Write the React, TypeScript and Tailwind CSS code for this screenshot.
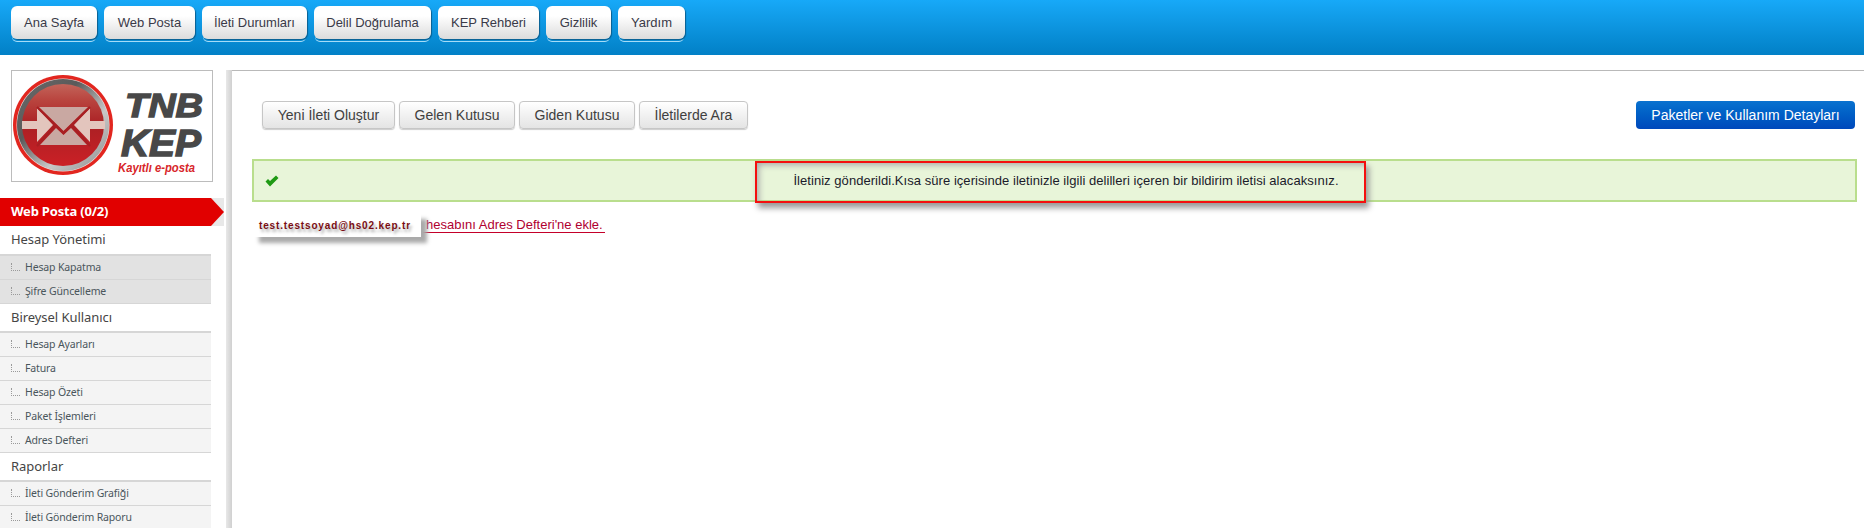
const nav: [string, number][] = [
  ["Ana Sayfa", 86],
  ["Web Posta", 91],
  ["İleti Durumları", 105],
  ["Delil Doğrulama", 117],
  ["KEP Rehberi", 101],
  ["Gizlilik", 65],
  ["Yardım", 67],
];

const tools: [string, number][] = [
  ["Yeni İleti Oluştur", 133],
  ["Gelen Kutusu", 116],
  ["Giden Kutusu", 116],
  ["İletilerde Ara", 109],
];

function Logo() {
  const font = "'Liberation Sans', sans-serif";
  return (
    <svg width="200" height="110" viewBox="0 0 200 110">
      <defs>
        <linearGradient id="ring" x1="0" y1="0" x2="1" y2="1">
          <stop offset="0" stopColor="#6a6a6a" />
          <stop offset="0.35" stopColor="#5a5a5a" />
          <stop offset="0.65" stopColor="#c8c8c8" />
          <stop offset="1" stopColor="#8a8a8a" />
        </linearGradient>
        <linearGradient id="disc" x1="0" y1="0" x2="0" y2="1">
          <stop offset="0" stopColor="#c2645a" />
          <stop offset="0.2" stopColor="#b9443e" />
          <stop offset="0.5" stopColor="#ab2024" />
          <stop offset="1" stopColor="#cb2026" />
        </linearGradient>
      </defs>
      <circle cx="51" cy="54" r="50" fill="#e2261f" />
      <circle cx="51" cy="54" r="46.5" fill="#eee0de" />
      <circle cx="51" cy="54" r="46" fill="url(#ring)" />
      <circle cx="51" cy="54" r="41" fill="url(#disc)" />
      <path d="M10 50H25V37L41 54L25 71V58H10Z" fill="#e3c5bd" />
      <path d="M93 50H78V37L62 54L78 71V58H93Z" fill="#e3c5bd" />
      <path d="M27 36H76L51.5 60Z" fill="#c9a8a2" />
      <path d="M28 74L44 57L51.5 64L59 57L75 74Z" fill="#c9a8a2" />
      <path d="M25 36L51.5 62L78 36" fill="none" stroke="#a81f22" strokeWidth="2.2" />
      <path d="M25 75L43 55M78 75L60 55" fill="none" stroke="#a81f22" strokeWidth="2.2" />
      <text x="113" y="46" fill="#484848" stroke="#484848" strokeWidth="1.4" fontSize="34" fontWeight="700" fontStyle="italic" fontFamily={font} textLength="78" lengthAdjust="spacingAndGlyphs">TNB</text>
      <text x="109" y="85" fill="#484848" stroke="#484848" strokeWidth="1.4" fontSize="36" fontWeight="700" fontStyle="italic" fontFamily={font} textLength="80" lengthAdjust="spacingAndGlyphs">KEP</text>
      <text x="106" y="101" fill="#d8262a" fontSize="12" fontWeight="700" fontStyle="italic" fontFamily={font} textLength="77" lengthAdjust="spacingAndGlyphs">Kayıtlı e-posta</text>
    </svg>
  );
}

function GroupTitle({ children, h }: { children: string; h: string }) {
  return (
    <div className={`${h} flex items-center border-b-2 border-[#d6d6d6] bg-white pl-[11px] text-[13px] tracking-[-0.05px] text-[#454545]`}>
      {children}
    </div>
  );
}

function SubItem({ children, dark }: { children: string; dark?: boolean }) {
  return (
    <div className={`flex h-6 items-center border-b border-[#d6d6d6] pl-[11px] text-[10.5px] tracking-[-0.15px] text-[#4a565c] ${dark ? "bg-[#e2e2e2]" : "bg-[#f4f4f4]"}`}>
      <span className="mr-[5px] mb-[2px] h-2 w-[9px] border-b border-l border-dotted border-[#9a9a9a]" />
      {children}
    </div>
  );
}

function Sidebar() {
  return (
    <aside className="flex w-[226px] shrink-0 flex-col font-['Noto_Sans',sans-serif]">
      <div className="mt-[15px] mb-4 ml-[11px] flex h-[112px] w-[202px] items-center justify-center border border-[#bcbcbc] bg-white">
        <Logo />
      </div>
      <div className="flex h-7 w-[224px] bg-[#e8e8e8]">
        <div className="flex w-[211px] items-center bg-[#e10000] pl-[11px] text-[13px] font-bold tracking-[-0.2px] text-white">
          Web Posta (0/2)
        </div>
        <svg width="13" height="28" viewBox="0 0 13 28" className="block">
          <path d="M0 0L13 14L0 28Z" fill="#e10000" />
        </svg>
      </div>
      <div className="w-[211px]">
        <GroupTitle h="h-[30px]">Hesap Yönetimi</GroupTitle>
        <SubItem dark>Hesap Kapatma</SubItem>
        <SubItem dark>Şifre Güncelleme</SubItem>
        <GroupTitle h="h-[29px]">Bireysel Kullanıcı</GroupTitle>
        <SubItem>Hesap Ayarları</SubItem>
        <SubItem>Fatura</SubItem>
        <SubItem>Hesap Özeti</SubItem>
        <SubItem>Paket İşlemleri</SubItem>
        <SubItem>Adres Defteri</SubItem>
        <GroupTitle h="h-[29px]">Raporlar</GroupTitle>
        <SubItem>İleti Gönderim Grafiği</SubItem>
        <SubItem>İleti Gönderim Raporu</SubItem>
      </div>
    </aside>
  );
}

export default function App() {
  return (
    <div className="h-[528px] w-[1864px] overflow-hidden bg-white font-['Liberation_Sans',sans-serif]">
      <header className="flex h-[55px] gap-[7px] bg-gradient-to-b from-[#17a9f8] to-[#0280c6] pt-[6px] pl-[11px]">
        {nav.map(([label, w]) => (
          <div
            key={label}
            style={{ width: w }}
            className="flex h-[33px] items-center justify-center rounded-[6px] bg-gradient-to-b from-white from-30% to-[#dcdcdc] text-[13px] text-[#3a3a48] shadow-[1px_1px_1px_#0a5f90,0_3px_0_-1px_#0a8fd8,0_4px_0_-1px_#a6dcf7]"
          >
            {label}
          </div>
        ))}
      </header>
      <div className="flex">
        <Sidebar />
        <div className="mt-[15px] h-[458px] w-[6px] shrink-0 bg-gradient-to-r from-[#e8e8e8] to-[#d0d0d0]" />
        <main className="relative mt-[15px] h-[458px] flex-1 border-t border-[#b9b9b9] bg-white pl-[20px]">
          <div className="flex items-center justify-between pt-[30px] pr-[9px] pl-[10px]">
            <div className="flex gap-[4px]">
              {tools.map(([label, w]) => (
                <div
                  key={label}
                  style={{ width: w }}
                  className="flex h-7 items-center justify-center rounded-[4px] border border-[#c6c6c6] bg-gradient-to-b from-white to-[#e4e4e4] text-[14px] text-[#404040] shadow-[0_1px_1px_#cccccc]"
                >
                  {label}
                </div>
              ))}
            </div>
            <div className="flex h-7 w-[219px] items-center justify-center rounded-[4px] bg-gradient-to-b from-[#0a72cf] to-[#0048bb] text-[14px] text-white">
              Paketler ve Kullanım Detayları
            </div>
          </div>
          <div className="mt-[30px] mr-[7px] flex h-[43px] items-center border-2 border-[#b9de8d] bg-[#e8f5d9] pl-[11px]">
            <svg width="14" height="12" viewBox="0 0 14 12">
              <path d="M0.5 6.5L3 4L5 6L11 0.5L13.5 3L5 11.5Z" fill="#1f9a14" />
            </svg>
          </div>
          <div className="absolute top-[90px] left-[523px] flex h-[42px] w-[611px] items-center justify-center border-2 border-[#f40f0f] pb-[2px] pl-[11px] text-[13px] tracking-[0.05px] text-[#1a1a2a] shadow-[3px_5px_6px_#9a9a9a,inset_4px_4px_6px_-2px_#a9a9a9]">
            İletiniz gönderildi.Kısa süre içerisinde iletinizle ilgili delilleri içeren bir bildirim iletisi alacaksınız.
          </div>
          <div className="mt-[10px] ml-[169px] flex h-6 items-center">
            <span className="w-[184px] border-b border-[#c4002a] pt-[1px] pl-[5px] text-[13px] leading-[15px] whitespace-pre text-[#b00030]">
              hesabını Adres Defteri'ne ekle.
            </span>
          </div>
          <div className="absolute top-[142px] left-[21px] flex h-6 w-[168px] items-center bg-white pl-[6px] text-[10px] font-bold tracking-[0.85px] text-[#7a0d12] shadow-[6px_6px_4px_#aaaaaa] [text-shadow:2px_3px_3px_#aaaaaa]">
            test.testsoyad@hs02.kep.tr
          </div>
        </main>
      </div>
    </div>
  );
}
